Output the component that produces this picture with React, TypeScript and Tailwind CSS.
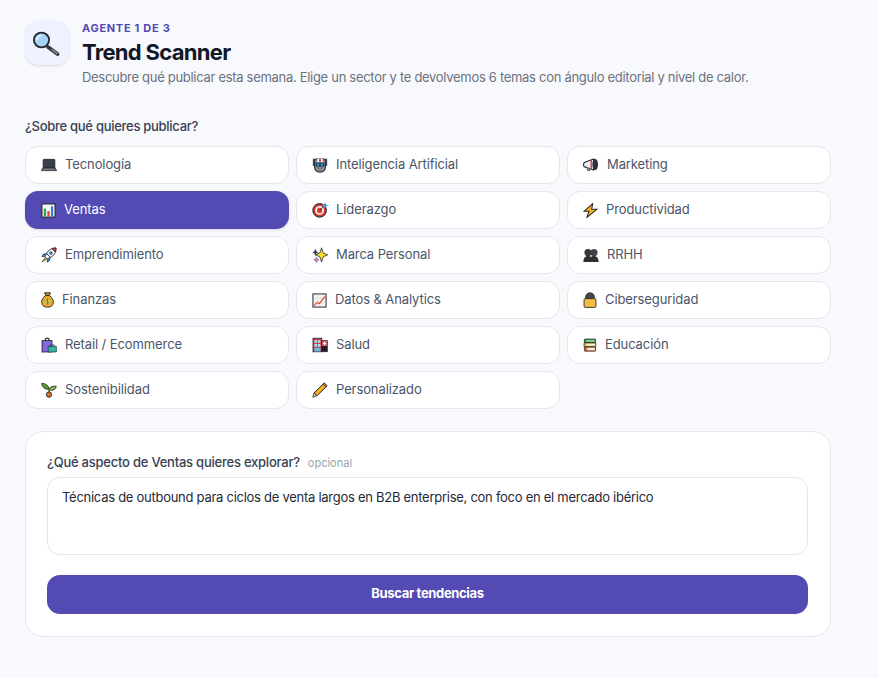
import type { ReactNode } from "react";

const outline = "#1f2430";

function Glyph({ size = 16, height, children }: { size?: number; height?: number; children: ReactNode }) {
  return (
    <svg width={size} height={height ?? size} viewBox="0 0 16 16" preserveAspectRatio="none" className="shrink-0">
      {children}
    </svg>
  );
}

const icons: Record<string, ReactNode> = {
  laptop: (
    <Glyph>
      <rect x="2.2" y="2.4" width="11.6" height="8.8" rx="0.6" fill="#3a3f47" stroke={outline} strokeWidth="0.9" />
      <path d="M1.8 11h12.4l1.5 2.6H.3z" fill="#757a82" stroke={outline} strokeWidth="0.8" />
    </Glyph>
  ),
  chart: (
    <Glyph size={15}>
      <rect x="1" y="1" width="14" height="14" fill="#f4f6f8" stroke="#20242c" strokeWidth="1.1" />
      <rect x="3" y="6" width="2.4" height="8.4" fill="#31a24c" />
      <rect x="6.8" y="8.5" width="2.4" height="5.9" fill="#e0452f" />
      <rect x="10.6" y="3.5" width="2.4" height="10.9" fill="#2f7de1" />
    </Glyph>
  ),
  rocket: (
    <Glyph>
      <path d="M15 1c-4.4-.2-7.4 1.8-9.4 5.6l3.8 3.8C13.2 8.4 15.2 5.4 15 1z" fill="#e8edf2" stroke={outline} strokeWidth="0.9" />
      <path d="M15 1c-1.5 0-2.8.2-4 .8l3.2 3.2c.6-1.2.8-2.5.8-4z" fill="#d8282f" stroke={outline} strokeWidth="0.6" />
      <circle cx="9.9" cy="6.1" r="1.3" fill="#4aa3e0" stroke={outline} strokeWidth="0.6" />
      <path d="M5.7 6.4 2.4 7 .9 9.6l3.5-.2zM9.3 10.4l-.7 3.3-2.6 1.5.2-3.6z" fill="#3b7fd0" stroke={outline} strokeWidth="0.6" />
      <path d="M4.4 10.1 1 15l4.9-3.4z" fill="#f3a21c" stroke={outline} strokeWidth="0.6" />
    </Glyph>
  ),
  bag: (
    <Glyph size={13} height={16}>
      <path d="M4.4.8h7.2L10.2 3.6H5.8z" fill="#c98a1e" stroke={outline} strokeWidth="1" />
      <path d="M5.6 3.6h4.8c3.4 2 5 4.4 4.8 6.8-.2 3-2.8 4.8-7.2 4.8S1 13.4.8 10.4C.6 8 2.2 5.6 5.6 3.6z" fill="#eeb02c" stroke={outline} strokeWidth="1" />
      <ellipse cx="8" cy="9.6" rx="3.6" ry="3.2" fill="#f7cf4f" stroke="#a8761a" strokeWidth="0.5" />
      <path d="M9.5 8.2c-.6-.7-2.9-.7-2.9.4 0 1.2 2.9.7 2.9 2 0 1-2.3 1-3 .2M8 6.8v5.6" fill="none" stroke="#2f8a3a" strokeWidth="0.9" />
    </Glyph>
  ),
  shopping: (
    <Glyph>
      <path d="M4.4 4V2C4.4.9 8 .9 8 2v2" fill="none" stroke="#4c3a20" strokeWidth="1.4" />
      <rect x="1" y="3.6" width="10" height="11.4" fill="#8467dc" stroke={outline} strokeWidth="0.8" />
      <path d="M7.2 9.4h8.2V15H7.2z" fill="#2fb5a4" stroke={outline} strokeWidth="0.6" />
      <path d="M9.4 9.4V8h4v1.4" fill="none" stroke={outline} strokeWidth="0.7" />
    </Glyph>
  ),
  seedling: (
    <Glyph>
      <path d="M8 7.4C7.6 3.6 5 1.4.8 1.4 1 5 3.8 7.4 8 7.4z" fill="#5d9e2f" stroke={outline} strokeWidth="0.9" />
      <path d="M8 8c.4-2.6 2.6-4 7.2-3.8C14.8 7.4 12 8.8 8 8z" fill="#83bd3f" stroke={outline} strokeWidth="0.9" />
      <path d="M8 7v4.4" stroke="#4b7a22" strokeWidth="1.5" />
      <circle cx="8" cy="12.6" r="2.7" fill="#d9702a" stroke={outline} strokeWidth="0.9" />
    </Glyph>
  ),
  robot: (
    <Glyph>
      <path d="M.8 1.2 3.4 3v6H.8zM15.2 1.2 12.6 3v6h2.6z" fill="#4a5058" />
      <path d="M2.6 2h10.8v9.4c0 2.2-2.2 3.8-5.4 3.8s-5.4-1.6-5.4-3.8z" fill="#7b838c" stroke={outline} strokeWidth="0.9" />
      <path d="M5.2 2h5.6v3H5.2z" fill="#f3f4f6" />
      <rect x="7" y="2.2" width="2" height="2.4" fill="#dc3b33" />
      <rect x="3.6" y="5.8" width="8.8" height="3.8" rx="0.8" fill="#19344a" />
      <rect x="4.8" y="6.6" width="2.4" height="1.9" fill="#37c0e0" />
      <rect x="8.8" y="6.6" width="2.4" height="1.9" fill="#37c0e0" />
    </Glyph>
  ),
  target: (
    <Glyph>
      <circle cx="7.6" cy="8.4" r="6.8" fill="#dd3a2e" stroke={outline} strokeWidth="1" />
      <circle cx="7.6" cy="8.4" r="4.4" fill="#f4f1ee" />
      <circle cx="7.6" cy="8.4" r="2.6" fill="#dd3a2e" />
      <path d="M7.6 8.4 13 3" stroke="#27445e" strokeWidth="1" />
      <path d="M10.8 3 13.4.8l.8 1.8 1.6.6-2.4 2.4-2.2-.4z" fill="#3a9ee0" />
    </Glyph>
  ),
  sparkles: (
    <Glyph>
      <path d="M9.6.8 11.2 6l4.4 1.8-4.4 2-1.6 5.2-1.8-5.2-4.2-2 4.2-1.8z" fill="#fbe22c" stroke={outline} strokeWidth="0.8" />
      <path d="M3.4 1.6 4.5 4.4l2 .9-2 .9-1.1 2.8-1.1-2.8-2-.9 2-.9z" fill="#2d3a5a" />
      <path d="M4.4 10.2l.9 1.8 1.8.8-1.8.8-.9 1.8-.9-1.8-1.8-.8 1.8-.8z" fill="#e586c6" stroke={outline} strokeWidth="0.4" />
    </Glyph>
  ),
  trend: (
    <Glyph size={15}>
      <rect x="1" y="1" width="14" height="14" fill="#f6f5f2" stroke="#2a2d33" strokeWidth="1.1" />
      <path d="M1.5 5.5h13M1.5 10h13M5.5 1.5v13M10 1.5v13" stroke="#cfd2d6" strokeWidth="0.5" />
      <path d="M2 13.4 5.6 10l2.2 1.4L14 3.6" fill="none" stroke="#e0442f" strokeWidth="1.2" />
    </Glyph>
  ),
  hospital: (
    <Glyph>
      <rect x="1" y="1.2" width="8.8" height="13.6" fill="#d63c58" stroke={outline} strokeWidth="0.8" />
      <rect x="2.4" y="3.2" width="2.6" height="2.6" fill="#9fe8f4" />
      <rect x="5.8" y="3.2" width="2.6" height="2.6" fill="#9fe8f4" />
      <rect x="2.4" y="7" width="2.6" height="2.6" fill="#9fe8f4" />
      <rect x="5.8" y="7" width="2.6" height="2.6" fill="#9fe8f4" />
      <rect x="2.4" y="10.8" width="6" height="3.6" fill="#54c8e0" />
      <rect x="9.8" y="3.6" width="5.6" height="11.2" fill="#1a1c20" stroke={outline} strokeWidth="0.6" />
      <rect x="10.1" y="4" width="5" height="5" fill="#ef5a70" />
      <path d="M12.6 4.9v3.2M11 6.5h3.2" stroke="#fff" strokeWidth="1" />
    </Glyph>
  ),
  pencil: (
    <Glyph>
      <path d="M12.2 1 15 3.8 5 13.8l-3-2.8z" fill="#f5b21d" stroke={outline} strokeWidth="1" />
      <path d="M2 11l3 2.8-4.2 1.4z" fill="#f1d3a8" stroke={outline} strokeWidth="0.8" />
      <path d="M12.2 1 15 3.8l-1.2 1.2L11 2.2z" fill="#e2727a" stroke={outline} strokeWidth="0.7" />
    </Glyph>
  ),
  megaphone: (
    <Glyph>
      <path d="M1.2 5.6 10.6 2v11L1.2 9.8C.4 9 .4 6.4 1.2 5.6z" fill="#eceef0" stroke={outline} strokeWidth="1.1" />
      <path d="M8.2 3v9" stroke="#d5323a" strokeWidth="1.3" />
      <ellipse cx="12.2" cy="7.5" rx="2.8" ry="5.8" fill="#2f3238" />
      <path d="M3.6 9.8 4.8 13.6h2L5.8 10.6" fill="#aeb4ba" stroke={outline} strokeWidth="0.7" />
    </Glyph>
  ),
  bolt: (
    <Glyph size={15}>
      <path d="M10.4.6 1 8.8h5.4L4.2 15.4 15 6.6H9.2z" fill="#f7b62b" stroke="#2a2621" strokeWidth="1.1" />
    </Glyph>
  ),
  people: (
    <Glyph>
      <circle cx="5" cy="5.6" r="3.6" fill="#33363b" />
      <circle cx="11" cy="5.6" r="3.6" fill="#3f4248" />
      <path d="M.4 15c0-4 2-6 4.6-6 1.4 0 2.4.4 3 1 .6-.6 1.6-1 3-1 2.6 0 4.6 2 4.6 6z" fill="#2b2e33" />
    </Glyph>
  ),
  lock: (
    <Glyph size={14} height={16}>
      <path d="M3 7.4V5C3 2.4 5.2.8 8 .8s5 1.6 5 4.2v2.4z" fill="#44474d" stroke={outline} strokeWidth="0.8" />
      <rect x="1.2" y="6.6" width="13.6" height="8.8" rx="1.4" fill="#f3bb40" stroke={outline} strokeWidth="0.9" />
    </Glyph>
  ),
  books: (
    <Glyph size={14}>
      <rect x="1.6" y="1.2" width="12.8" height="4.2" rx="0.6" fill="#3ba55c" stroke={outline} strokeWidth="0.9" />
      <path d="M4 2.2h9.4v2.2H4z" fill="#8fd08f" />
      <rect x="1.2" y="5.6" width="13.4" height="4.4" rx="0.6" fill="#f1c84a" stroke={outline} strokeWidth="0.9" />
      <path d="M4.4 6.6h9.4v2.4H4.4z" fill="#f7eecb" />
      <rect x="1.6" y="10.2" width="12.8" height="4.8" rx="0.6" fill="#ec6a2b" stroke={outline} strokeWidth="0.9" />
      <path d="M5 11.2h8.6V14H5z" fill="#f2f0ea" />
    </Glyph>
  ),
};

const topics = [
  { label: "Tecnología", icon: "laptop" },
  { label: "Inteligencia Artificial", icon: "robot" },
  { label: "Marketing", icon: "megaphone" },
  { label: "Ventas", icon: "chart", active: true },
  { label: "Liderazgo", icon: "target" },
  { label: "Productividad", icon: "bolt" },
  { label: "Emprendimiento", icon: "rocket" },
  { label: "Marca Personal", icon: "sparkles" },
  { label: "RRHH", icon: "people" },
  { label: "Finanzas", icon: "bag" },
  { label: "Datos & Analytics", icon: "trend" },
  { label: "Ciberseguridad", icon: "lock" },
  { label: "Retail / Ecommerce", icon: "shopping" },
  { label: "Salud", icon: "hospital" },
  { label: "Educación", icon: "books" },
  { label: "Sostenibilidad", icon: "seedling" },
  { label: "Personalizado", icon: "pencil" },
];

function TopicButton({ label, icon, active }: { label: string; icon: string; active?: boolean }) {
  return (
    <button
      className={
        active
          ? "h-[38px] flex items-center gap-2 pl-4 rounded-[13px] bg-[#534ab3] text-white text-[13px] tracking-[-0.1px] shadow-sm"
          : "h-[38px] flex items-center gap-2 pl-[15px] rounded-[13px] bg-white border border-[#e5e7ee] text-[#4b5568] text-[13px] tracking-[-0.1px]"
      }
    >
      {icons[icon]}
      <span>{label}</span>
    </button>
  );
}

export default function App() {
  return (
    <div className="min-h-screen bg-[#f8f9fc] pl-[25px] pr-[47px] pt-[21px] pb-[41px] font-['Inter',sans-serif]">
      {/* Header */}
      <header className="flex gap-[13px]">
        <div className="w-[44px] h-[44px] rounded-[13px] bg-[#eff2fe] shadow-sm flex items-center justify-center">
          <svg width="28" height="28" viewBox="0 0 28 28">
            <path d="M15 18 24.5 25" stroke="#33363b" strokeWidth="3.8" strokeLinecap="round" />
            <path d="M19 20.6 24 24.4" stroke="#8a9097" strokeWidth="1.5" strokeLinecap="round" />
            <ellipse cx="8.5" cy="11" rx="7.6" ry="7.4" fill="#a4d3f5" stroke="#23262b" strokeWidth="1.8" />
            <path d="M4 10.6c.3-2.3 1.8-3.7 3.8-4" fill="none" stroke="#e3f3ff" strokeWidth="1.6" strokeLinecap="round" />
          </svg>
        </div>
        <div className="flex flex-col">
          <span className="text-[11px] leading-[14px] font-bold tracking-[0.7px] text-[#534ab3]">AGENTE 1 DE 3</span>
          <h1 className="mt-[3px] text-[22px] leading-[28px] font-bold tracking-[-0.7px] text-[#111827]">Trend Scanner</h1>
          <p className="mt-[2px] text-[13px] leading-[18px] tracking-[-0.3px] text-[#6b7280]">
            Descubre qué publicar esta semana. Elige un sector y te devolvemos 6 temas con ángulo editorial y nivel de calor.
          </p>
        </div>
      </header>

      {/* Sector */}
      <p className="mt-[31px] text-[13px] leading-[18px] tracking-[-0.28px] font-medium text-[#374151]">¿Sobre qué quieres publicar?</p>
      <div className="mt-[11px] grid grid-cols-3 gap-[7px]">
        {topics.map((t) => (
          <TopicButton key={t.label} label={t.label} icon={t.icon} active={t.active} />
        ))}
      </div>

      {/* Aspecto */}
      <section className="mt-[22px] bg-white border border-[#e5e7ee] rounded-[18px] pl-[21px] pr-[22px] pt-[21px] pb-[22px]">
        <div className="flex items-baseline gap-2">
          <span className="text-[13px] leading-[18px] tracking-[-0.23px] font-medium text-[#374151]">¿Qué aspecto de Ventas quieres explorar?</span>
          <span className="text-[11px] text-[#9ca3af]">opcional</span>
        </div>
        <div className="mt-[5px] h-[78px] rounded-[13px] border border-[#e5e7ee] px-[14px] py-[10px] text-[13px] leading-[18px] tracking-[-0.27px] text-[#1f2937]">
          Técnicas de outbound para ciclos de venta largos en B2B enterprise, con foco en el mercado ibérico
        </div>
        <button className="mt-5 w-full h-[39px] rounded-[13px] bg-[#534ab3] text-white text-[13px] font-bold tracking-[-0.34px]">
          Buscar tendencias
        </button>
      </section>
    </div>
  );
}
